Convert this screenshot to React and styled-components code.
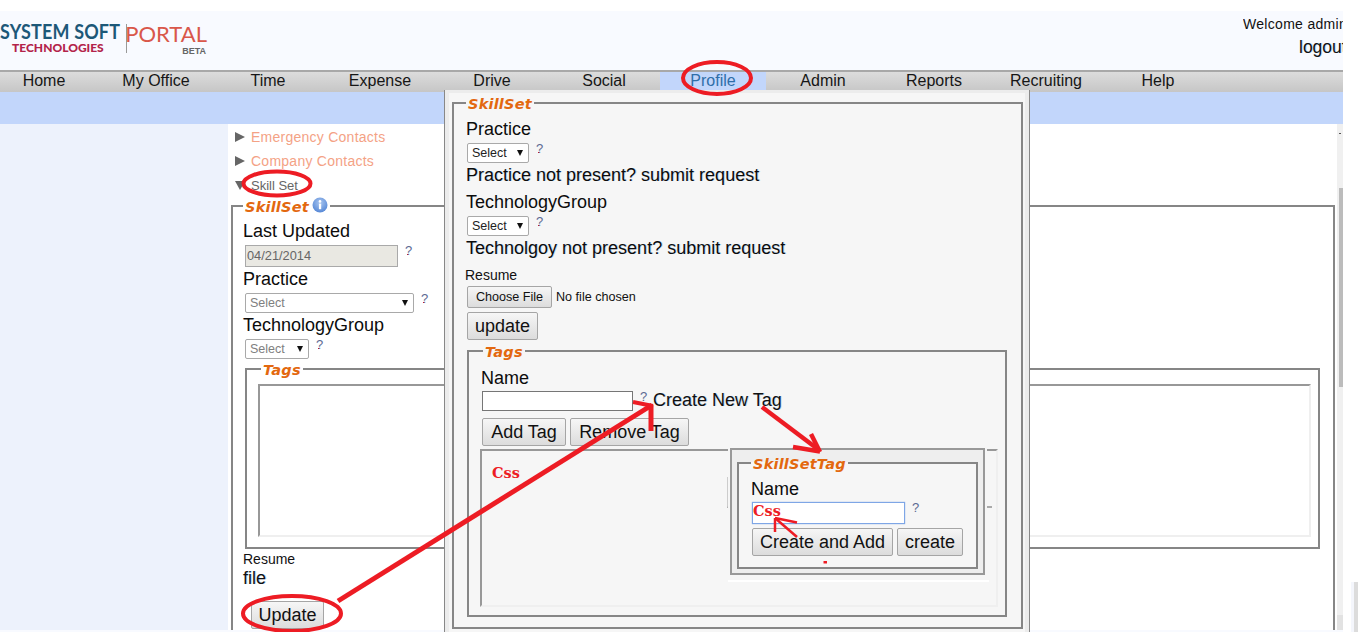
import React from 'react';
import styled, { createGlobalStyle } from 'styled-components';

const Global = createGlobalStyle`
  html, body { margin: 0; padding: 0; background: #fff; overflow: hidden; }
  * { box-sizing: border-box; }
  body { font-family: "Liberation Sans", Arial, sans-serif; color: #111; }
`;

const Page = styled.div`
  position: relative;
  display: flex;
  width: 1358px;
  height: 632px;
  overflow: hidden;
  background: #fff;
`;
const Column = styled.div`
  width: 1343px;
  padding-top: 11px;
  display: flex;
  flex-direction: column;
`;
const RightStrip = styled.div`
  flex: 1;
  display: flex;
  justify-content: flex-end;
  align-items: flex-end;
`;
const StripMark = styled.div`
  width: 7px;
  height: 50px;
  background: linear-gradient(90deg, #f4f6fc 0 3px, #dcdcdc 3px);
`;

const Header = styled.header`
  height: 59px;
  background: #f8faff;
  display: flex;
  justify-content: space-between;
`;
const Logo = styled.div`
  display: flex;
  padding-top: 10px;
  height: 59px;
`;
const BrandLeft = styled.div`
  width: 126px;
  display: flex;
  flex-direction: column;
`;
const BrandName = styled.div`
  font-family: "Lato", sans-serif;
  font-weight: 700;
  font-size: 20.5px;
  line-height: 20px;
  letter-spacing: 0.2px;
  color: #1d5878;
  white-space: nowrap;
  transform: scaleX(.875);
  transform-origin: left center;
`;
const BrandSub = styled.div`
  font-family: "Lato", sans-serif;
  font-weight: 900;
  font-size: 12px;
  line-height: 14px;
  margin: 0 0 0 12px;
  color: #b3234a;
  white-space: nowrap;
`;
const BrandRule = styled.div`
  width: 1px;
  height: 29px;
  background: #999;
  margin-top: 3px;
`;
const BrandRight = styled.div`
  width: 77px;
  margin: 2px 0 0 3px;
  display: flex;
  flex-direction: column;
  align-items: flex-end;
`;
const BrandPortal = styled.div`
  font-family: "Lato", sans-serif;
  font-weight: 400;
  font-size: 22px;
  line-height: 22px;
  color: #d9574a;
  white-space: nowrap;
`;
const BrandBeta = styled.div`
  font-size: 9px;
  font-weight: 700;
  line-height: 10px;
  margin: 1px 1px 0 0;
  color: #666;
`;
const Account = styled.div`
  width: 100px;
  overflow: hidden;
  white-space: nowrap;
  padding-top: 4px;
`;
const Welcome = styled.div`
  font-size: 14px;
  line-height: 18px;
  letter-spacing: .3px;
`;
const Logout = styled.div`
  font-size: 17.5px;
  line-height: 24px;
  margin: 2px 0 0 56px;
  text-shadow: 1px 0 0 rgba(70, 150, 230, .3);
`;

const Nav = styled.nav`
  height: 22px;
  display: flex;
  border-top: 2px solid #a8a8a8;
  background: linear-gradient(#dcdcdc, #c6c6c6);
  overflow: hidden;
`;
const NavLead = styled.div`
  margin-left: -12px;
`;
const NavItem = styled.div`
  flex: none;
  width: ${p => p.$w}px;
  text-align: center;
  font-size: 16px;
  line-height: 18px;
  color: ${p => (p.$active ? '#2f6ea8' : '#161616')};
  background: ${p => (p.$active ? '#c2d6fb' : 'transparent')};
`;
const Band = styled.div`
  height: 32px;
  background: #c2d6fb;
`;
const Main = styled.div`
  height: 506px;
  display: flex;
`;
const Sidebar = styled.aside`
  width: 228px;
  background: #edf2fc;
`;
const Content = styled.main`
  width: 1109px;
  background: #fff;
  overflow: hidden;
  padding: 1px 0 0 3px;
`;
const Foot = styled.div`
  height: 2px;
  background: #f8faff;
`;
const ScrollTrack = styled.div`
  width: 6px;
  background: #f0f0f0;
  display: flex;
  flex-direction: column;
  align-items: flex-end;
`;
const ScrollMark = styled.div`
  width: 2px;
  height: 1px;
  background: #555;
  margin: 9px 2px 0 0;
`;
const ScrollThumb = styled.div`
  width: 4px;
  height: 199px;
  margin-top: 54px;
  background: #bcbcbc;
`;
const ScrollEnd = styled.div`
  width: 6px;
  height: 15px;
  margin-top: auto;
  background: #e2e2e2;
`;

const TreeRow = styled.div`
  height: 24px;
  display: flex;
  align-items: center;
  font-size: ${p => p.$fs || 14}px;
  letter-spacing: ${p => p.$ls || 0}px;
  color: ${p => p.$color};
`;
const Caret = styled.span`
  width: 0;
  height: 0;
  margin: 0 6px 0 4px;
  border-style: solid;
  border-color: transparent;
  ${p => p.$open
    ? 'border-width: 9px 5.5px 0; border-top-color: #666; margin-right: 6px;'
    : 'border-width: 5px 0 5px 10px; border-left-color: #666;'}
`;

const Group = styled.fieldset`
  display: block;
  min-width: 0;
  margin: ${p => p.$margin || 0};
  width: ${p => p.$w ? `${p.$w}px` : 'auto'};
  height: ${p => p.$h}px;
  padding: 0 0 0 ${p => p.$pad ?? 10}px;
  border: 2px solid #868686;
`;
const Legend = styled.legend`
  display: flex;
  align-items: center;
  gap: 3px;
  height: 18px;
  padding: 2px 2px 0;
  margin-left: ${p => p.$left || 0}px;
  font-family: "DejaVu Sans", Verdana, sans-serif;
  font-weight: 700;
  font-style: italic;
  font-size: 14.5px;
  line-height: 16px;
  letter-spacing: .2px;
  color: #e3680f;
`;
const Label = styled.div`
  height: 22px;
  line-height: 22px;
  font-size: 18px;
  margin-top: ${p => p.$top || 0}px;
  color: #0c0c0c;
  white-space: nowrap;
  text-shadow: ${p => p.$soft ? '1px 0 0 rgba(70, 150, 230, .28)' : 'none'};
`;
const SmallLabel = styled.div`
  height: 18px;
  line-height: 18px;
  font-size: 14px;
  margin: ${p => p.$top || 0}px 0 0 ${p => p.$left || 0}px;
  color: #111;
`;
const FieldRow = styled.div`
  display: flex;
  align-items: flex-start;
  margin: 3px 0 0 ${p => p.$left ?? 2}px;
`;
const Help = styled.span`
  position: relative;
  width: 8px;
  margin: -2px 0 0 ${p => p.$gap || 7}px;
  font-size: 13px;
  line-height: 15px;
  color: #5d6a92;
  &::after {
    content: '';
    position: absolute;
    left: 2px;
    top: 11px;
    width: 1px;
    height: 1px;
    background: ${p => p.$plain ? 'transparent' : '#c01830'};
  }
`;
const DateInput = styled.div`
  width: 153px;
  height: 22px;
  padding-left: 1px;
  border: 1px solid #a9a9a9;
  background: #e9e8e2;
  font-size: 12.8px;
  line-height: 20px;
  color: #666;
`;
const SelectBox = styled.div`
  width: ${p => p.$w}px;
  height: 20px;
  display: flex;
  align-items: center;
  justify-content: space-between;
  padding: 0 5px 0 4px;
  border: 1px solid #a9a9a9;
  border-radius: 2px;
  background: #fff;
  font-size: 12.5px;
  color: ${p => p.$dark ? '#222' : '#808080'};
`;
const SelectArrow = styled.span`
  width: 0;
  height: 0;
  border-style: solid;
  border-color: #111 transparent transparent;
  border-width: 6px 3.5px 0;
`;
const TagBox = styled.div`
  position: relative;
  margin: ${p => p.$margin};
  height: ${p => p.$h}px;
  border: 2px solid;
  border-color: #989898 #efefef #efefef #989898;
`;
const FileText = styled.div`
  height: 20px;
  line-height: 20px;
  font-size: 18px;
  text-shadow: 1px 0 0 rgba(70, 150, 230, .35);
`;
const Button = styled.div`
  flex: none;
  width: ${p => p.$w}px;
  height: ${p => p.$h || 28}px;
  margin: ${p => p.$margin || 0};
  display: flex;
  align-items: center;
  justify-content: center;
  border: 1px solid #a5a5a5;
  border-radius: 2px;
  background: linear-gradient(#f6f6f6, #dcdcdc);
  font-size: ${p => p.$fs || 18}px;
  color: #111;
  white-space: nowrap;
`;
const ButtonRow = styled.div`
  display: flex;
  gap: 4px;
  margin: ${p => p.$margin};
`;
const FileRow = styled.div`
  display: flex;
  align-items: center;
  gap: 4px;
  margin: 2px 0 0 1px;
  font-size: 12.6px;
`;

const Modal = styled.div`
  position: absolute;
  left: 444px;
  top: 90px;
  width: 586px;
  height: 560px;
  padding: 4px 0 0 7px;
  background: #f6f6f6;
  border-style: solid;
  border-width: 0 1px 0 1px;
  border-color: #888;
  box-shadow: inset 0 3px 0 #ececec, inset 4px 0 0 #ececec, inset -4px 0 0 #ececec;
`;
const InlineRow = styled.div`
  display: flex;
  align-items: flex-start;
  margin: 2px 0 0 1px;
`;
const TextInput = styled.div`
  width: ${p => p.$w}px;
  height: ${p => p.$h}px;
  border: 1px solid ${p => p.$focus ? '#7ea6e6' : '#767676'};
  background: #fff;
  box-shadow: ${p => p.$focus ? '0 0 1px #7ea6e6' : 'none'};
`;
const CreateLink = styled.span`
  margin: -2px 0 0 5px;
  font-size: 18px;
  line-height: 22px;
  text-shadow: 1px 0 0 rgba(70, 150, 230, .28);
`;
const TagName = styled.span`
  display: block;
  font-family: "DejaVu Serif", serif;
  font-weight: 700;
  font-size: 14.5px;
  line-height: ${p => p.$lh || 18}px;
  color: #ed1c24;
`;
const ListTag = styled.div`
  padding: 13px 0 0 10px;
`;
const HiddenButton = styled.div`
  position: absolute;
  left: 245px;
  top: 26px;
  width: 265px;
  height: 31px;
  border-left: 1px solid #ccc;
  border-bottom: 2px solid #aaa;
`;
const Popup = styled.div`
  position: absolute;
  left: 248px;
  top: -3px;
  width: 255px;
  height: 127px;
  padding: 4px 5px 0;
  background: #eeeeee;
  border: 2px solid #999;
  box-shadow: 0 0 0 2px #f6f6f6;
`;
const PopupGap = styled.div`
  position: absolute;
  left: 246px;
  top: 129px;
  width: 261px;
  height: 2px;
  background: #fff;
`;
const PopupGroup = styled(Group)`
  background: #f6f6f6;
`;

const Overlay = styled.svg`
  position: absolute;
  left: 0;
  top: 0;
  pointer-events: none;
`;

const navItems = [
  ['Home', 112], ['My Office', 112], ['Time', 112], ['Expense', 112], ['Drive', 112], ['Social', 112],
  ['Profile', 106], ['Admin', 114], ['Reports', 108], ['Recruiting', 116], ['Help', 108],
];

const InfoIcon = () => (
  <svg width="16" height="16" viewBox="0 0 16 16" style={{ marginTop: -4 }}>
    <defs>
      <radialGradient id="info" cx="50%" cy="35%" r="70%">
        <stop offset="0" stopColor="#a9c6f0" />
        <stop offset="1" stopColor="#4f83d4" />
      </radialGradient>
    </defs>
    <circle cx="8" cy="8" r="7.5" fill="url(#info)" />
    <circle cx="8" cy="4.4" r="1.3" fill="#fff" />
    <rect x="6.9" y="6.6" width="2.3" height="5.6" fill="#fff" />
  </svg>
);

const Annotations = () => (
  <Overlay width="1358" height="632" viewBox="0 0 1358 632" fill="none" stroke="#ed1c24" strokeLinecap="butt">
    <g strokeWidth="4">
      <ellipse cx="717" cy="78" rx="34" ry="16" />
      <ellipse cx="277" cy="183.500" rx="33.500" ry="12" />
      <ellipse cx="292" cy="613.500" rx="49" ry="17.500" />
    </g>
    <g strokeWidth="5">
      <path d="M338 601 L652 405" />
      <path d="M651 431 V405" />
      <path d="M633 402 L653 406" strokeWidth="4" />
    </g>
    <g strokeWidth="4.500">
      <path d="M762 407 L819 450" />
      <path d="M811 434 L820 452" />
      <path d="M793 447 L820 451.500" />
    </g>
    <g strokeWidth="2.500">
      <path d="M775 518 L797 522.500" />
      <path d="M775 518 L797 537" />
      <path d="M775 518 V532" />
    </g>
    <rect x="823.500" y="561" width="3.500" height="2.500" fill="#ed1c24" stroke="none" />
  </Overlay>
);

export default function App() {
  return (
    <Page>
      <Global />
      <Column>
        <Header>
          <Logo>
            <BrandLeft>
              <BrandName>SYSTEM SOFT</BrandName>
              <BrandSub>TECHNOLOGIES</BrandSub>
            </BrandLeft>
            <BrandRule />
            <BrandRight>
              <BrandPortal>PORTAL</BrandPortal>
              <BrandBeta>BETA</BrandBeta>
            </BrandRight>
          </Logo>
          <Account>
            <Welcome>Welcome admin</Welcome>
            <Logout>logout</Logout>
          </Account>
        </Header>
        <Nav>
          <NavLead />
          {navItems.map(([name, w]) => (
            <NavItem key={name} $w={w} $active={name === 'Profile'}>{name}</NavItem>
          ))}
        </Nav>
        <Band />
        <Main>
          <Sidebar />
          <Content>
            <TreeRow $color="#f4a285" $ls={0.25}><Caret />Emergency Contacts</TreeRow>
            <TreeRow $color="#f4a285" $ls={0.25}><Caret />Company Contacts</TreeRow>
            <TreeRow $color="#666" $fs={13}><Caret $open />Skill Set</TreeRow>
            <Group $w={1104} $h={480}>
              <Legend>SkillSet<InfoIcon /></Legend>
              <Label $top={5}>Last Updated</Label>
              <FieldRow>
                <DateInput>04/21/2014</DateInput>
                <Help>?</Help>
              </FieldRow>
              <Label $top={1}>Practice</Label>
              <FieldRow>
                <SelectBox $w={169}>Select<SelectArrow /></SelectBox>
                <Help>?</Help>
              </FieldRow>
              <Label $top={1}>TechnologyGroup</Label>
              <FieldRow>
                <SelectBox $w={64}>Select<SelectArrow /></SelectBox>
                <Help>?</Help>
              </FieldRow>
              <Group $w={1075} $h={189} $margin="1px 0 0 2px" $pad={12}>
                <Legend $left={2}>Tags</Legend>
                <TagBox $h={153} $margin="6px 7px 0 -1px" />
              </Group>
              <SmallLabel $top={1}>Resume</SmallLabel>
              <FileText>file</FileText>
              <Button $w={73} $margin="13px 0 0 8px">Update</Button>
            </Group>
          </Content>
          <ScrollTrack>
            <ScrollMark />
            <ScrollThumb />
            <ScrollEnd />
          </ScrollTrack>
        </Main>
        <Foot />
      </Column>
      <RightStrip><StripMark /></RightStrip>

      <Modal>
        <Group $w={571} $h={535} $pad={12}>
          <Legend $left={0}>SkillSet</Legend>
          <Label $top={6}>Practice</Label>
          <FieldRow $left={1}>
            <SelectBox $w={62} $dark>Select<SelectArrow /></SelectBox>
            <Help>?</Help>
          </FieldRow>
          <Label $top={1} $soft>Practice not present? submit request</Label>
          <Label $top={5}>TechnologyGroup</Label>
          <FieldRow $left={1}>
            <SelectBox $w={62} $dark>Select<SelectArrow /></SelectBox>
            <Help>?</Help>
          </FieldRow>
          <Label $top={1} $soft>Technolgoy not present? submit request</Label>
          <SmallLabel $top={7} $left={-1}>Resume</SmallLabel>
          <FileRow>
            <Button $w={85} $h={22} $fs={12.6}>Choose File</Button>
            No file chosen
          </FileRow>
          <Button $w={71} $margin="4px 0 0 1px">update</Button>
          <Group $w={540} $h={275} $margin="2px 0 0 1px" $pad={12}>
            <Legend $left={2}>Tags</Legend>
            <Label $top={7}>Name</Label>
            <InlineRow>
              <TextInput $w={151} $h={20} />
              <Help $plain $gap={7}>?</Help>
              <CreateLink>Create New Tag</CreateLink>
            </InlineRow>
            <ButtonRow $margin="7px 0 0 1px">
              <Button $w={84}>Add Tag</Button>
              <Button $w={119}>Remove Tag</Button>
            </ButtonRow>
            <TagBox $h={158} $margin="3px 7px 0 -1px">
              <ListTag><TagName>Css</TagName></ListTag>
              <HiddenButton />
              <Popup>
                <PopupGroup $w={241} $h={115} $pad={12}>
                  <Legend $left={0}>SkillSetTag</Legend>
                  <Label $top={6}>Name</Label>
                  <InlineRow>
                    <TextInput $w={153} $h={22} $focus><TagName $lh={16}>Css</TagName></TextInput>
                    <Help $plain>?</Help>
                  </InlineRow>
                  <ButtonRow $margin="4px 0 0 1px">
                    <Button $w={141}>Create and Add</Button>
                    <Button $w={66}>create</Button>
                  </ButtonRow>
                </PopupGroup>
              </Popup>
              <PopupGap />
            </TagBox>
          </Group>
        </Group>
      </Modal>
      <Annotations />
    </Page>
  );
}
